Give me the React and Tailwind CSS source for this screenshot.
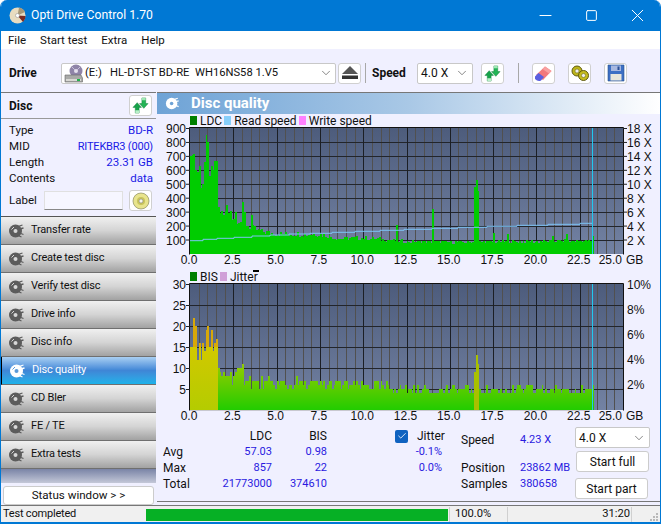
import React from 'react'
import { ChevronDown, Minus, Square, X, Check } from 'lucide-react'

const rnd = (i) => {
  const x = Math.sin(i * 12.9898) * 43758.5453
  return x - Math.floor(x)
}

const lerp = (pts, gb) => {
  for (let i = 1; i < pts.length; i++) {
    if (gb <= pts[i][0]) {
      const [a, va] = pts[i - 1]
      const [b, vb] = pts[i]
      return va + ((vb - va) * (gb - a)) / (b - a)
    }
  }
  return pts[pts.length - 1][1]
}

const gbToX = (gb) => 190 + gb * 17.32
const BARS = 233

// LDC values, one bar per 0.1 GB
const ldcStart = [700, 710, 720, 600, 590, 630, 470, 500, 660, 857, 800, 560, 630, 600, 670, 670]
const ldcBase = [[1.6, 300], [2.3, 280], [3, 230], [3.5, 185], [4, 165], [5, 145], [7.5, 140], [8.5, 110], [10, 115], [12.5, 90], [15, 85], [20, 90], [23.3, 95]]
const ldcPeaks = { 21: 350, 23: 310, 26: 300, 30: 370, 31: 300, 35: 280, 119: 210, 140: 320, 164: 480, 165: 530, 166: 450, 175: 150, 183: 140, 209: 130, 217: 140, 232: 130 }
const ldc = Array.from({ length: BARS }, (_, i) => {
  if (i < ldcStart.length) return ldcStart[i]
  if (ldcPeaks[i]) return ldcPeaks[i]
  return lerp(ldcBase, i / 10) * (0.86 + 0.28 * rnd(i))
})

const bisStart = [15, 15, 22, 20, 12, 16, 12, 16, 14, 19, 20, 15, 19, 14, 16, 17]
const bisBase = [[1.6, 8.500], [3.2, 8.500], [3.6, 6.500], [10, 6], [13, 5], [23.3, 4.800]]
const bisPeaks = { 30: 11, 164: 9, 165: 13, 166: 11 }
const bis = Array.from({ length: BARS }, (_, i) => {
  if (i < bisStart.length) return bisStart[i]
  if (bisPeaks[i]) return bisPeaks[i]
  return Math.round(lerp(bisBase, i / 10) * (0.72 + 0.5 * rnd(i + 400)))
})

const readSpeed = [
  [190, 240.7], [203, 239.3], [217, 238.3], [234, 237.3], [252, 236], [270, 235], [289, 234], [310, 233.3], [332, 232.3], [355, 231.3], [380, 230.3], [404, 229.3],
  [432, 228.3], [458, 227.3], [487, 226.3], [517, 225.3], [548, 224.3], [580, 223.3], [592, 223.3],
]

const Grid = ({ top, bottom, rows }) => {
  const minor = []
  const major = []
  for (let i = 1; i < 50; i++) {
    const x = Math.round(190 + i * 8.66) + 0.5
    if (i % 5 === 0) major.push(x)
    else minor.push(x)
  }
  return (
    <g strokeWidth="1" shapeRendering="crispEdges">
      {minor.map((x) => <line key={x} x1={x} x2={x} y1={top} y2={bottom} stroke="#51504f" />)}
      {rows.map((y) => <line key={y} x1="190" x2="623" y1={y} y2={y} stroke="#22252b" />)}
      {major.map((x) => <line key={x} x1={x} x2={x} y1={top} y2={bottom} stroke="#1c1f25" />)}
    </g>
  )
}

const XLabels = ({ y }) => (
  <g fontFamily="'Liberation Sans', sans-serif" fontSize="12" fill="#111">
    {['0.0', '2.5', '5.0', '7.5', '10.0', '12.5', '15.0', '17.5', '20.0', '22.5'].map((t, i) => (
      <text key={t} x={189 + i * 43.3} y={y} textAnchor="middle">{t}</text>
    ))}
    <text x="622" y={y} textAnchor="end">25.0</text>
    <text x="626" y={y}>GB</text>
  </g>
)

const TopChart = () => (
  <svg width="504" height="146" viewBox="157 122 504 146" className="-mt-[5px] block">
    <defs>
      <linearGradient id="plotA" x1="0" y1="0" x2="0" y2="1">
        <stop offset="0" stopColor="#4d5c7c" />
        <stop offset="1" stopColor="#7382a3" />
      </linearGradient>
    </defs>
    <rect x="190" y="128" width="433" height="126" fill="url(#plotA)" />
    <Grid top={128} bottom={254} rows={[142.5, 156.5, 170.5, 184.5, 198.5, 212.5, 226.5, 240.5]} />
    {ldc.map((v, i) => (
      <rect key={i} x={gbToX(i / 10)} y={254 - v * 0.1394} width="1.9" height={v * 0.1394} fill="#00cc00" shapeRendering="crispEdges" />
    ))}
    <polyline
      fill="none"
      stroke="#7cc4f4"
      strokeWidth="1"
      points={readSpeed.map(([x, y], i) => (i === 0 ? `${x},${y}` : `${x},${readSpeed[i - 1][1]} ${x},${y}`)).join(' ')}
    />
    <line x1="592.5" x2="592.5" y1="128" y2="254" stroke="#22c8ee" />
    <path d="M189.5 127.5H623.5V254.5" fill="none" stroke="#111" />
    <path d="M189.5 127.5V254.5" fill="none" stroke="#111" />
    <g fontFamily="'Liberation Sans', sans-serif" fontSize="12" fill="#111">
      {[900, 800, 700, 600, 500, 400, 300, 200, 100].map((t, i) => (
        <g key={t}>
          <text x="186" y={133 + i * 13.94} textAnchor="end">{t}</text>
          <line x1="186" x2="190" y1={128.5 + i * 13.94} y2={128.5 + i * 13.94} stroke="#222" />
        </g>
      ))}
      {[18, 16, 14, 12, 10, 8, 6, 4, 2].map((t, i) => (
        <g key={t}>
          <text x="627" y={133 + i * 13.94}>{t} X</text>
          <line x1="623" x2="627" y1={128.5 + i * 13.94} y2={128.5 + i * 13.94} stroke="#222" />
        </g>
      ))}
    </g>
    <XLabels y={264} />
  </svg>
)

const BottomChart = () => (
  <svg width="504" height="146" viewBox="157 278 504 146" className="-mt-[5px] block">
    <defs>
      <linearGradient id="plotB" x1="0" y1="0" x2="0" y2="1">
        <stop offset="0" stopColor="#4d5c7c" />
        <stop offset="1" stopColor="#7382a3" />
      </linearGradient>
      <linearGradient id="bisFill" gradientUnits="userSpaceOnUse" x1="0" y1="410" x2="0" y2="350">
        <stop offset="0" stopColor="#22cc00" />
        <stop offset="0.4" stopColor="#5fcc00" />
        <stop offset="1" stopColor="#b4cc00" />
      </linearGradient>
      <linearGradient id="bisHigh" gradientUnits="userSpaceOnUse" x1="0" y1="410" x2="0" y2="345">
        <stop offset="0" stopColor="#b4cc00" />
        <stop offset="1" stopColor="#d2c800" />
      </linearGradient>
    </defs>
    <rect x="190" y="284" width="433" height="126" fill="url(#plotB)" />
    <Grid top={284} bottom={410} rows={[305.5, 326.5, 347.5, 368.5, 389.5]} />
    {bis.map((v, i) => {
      const early = i < 16
      const spike = i >= 164 && i <= 166
      return (
        <g key={i} shapeRendering="crispEdges">
          <rect x={gbToX(i / 10)} y={410 - v * 4.2} width="1.9" height={v * 4.2} fill={early ? 'url(#bisHigh)' : spike ? '#a8c000' : 'url(#bisFill)'} />
          {early && v > 15 && <rect x={gbToX(i / 10)} y={410 - v * 4.2} width="1.9" height={(v - 15) * 4.2} fill="#d8a808" />}
        </g>
      )
    })}
    <line x1="592.5" x2="592.5" y1="284" y2="410" stroke="#22c8ee" />
    <path d="M189.5 410.5V283.5H623.5V410.5" fill="none" stroke="#111" />
    <line x1="190" x2="590" y1="410.5" y2="410.5" stroke="#c8c8d0" />
    <g fontFamily="'Liberation Sans', sans-serif" fontSize="12" fill="#111">
      {[30, 25, 20, 15, 10, 5].map((t, i) => (
        <g key={t}>
          <text x="186" y={289 + i * 21} textAnchor="end">{t}</text>
          <line x1="186" x2="190" y1={284.5 + i * 21} y2={284.5 + i * 21} stroke="#222" />
        </g>
      ))}
      {['10%', '8%', '6%', '4%', '2%'].map((t, i) => (
        <text key={t} x="627" y={289 + i * 25}>{t}</text>
      ))}
    </g>
    <XLabels y={420} />
  </svg>
)

const Legend = ({ items, children }) => (
  <div className="relative z-10 flex h-[13px] items-center gap-[2px] pl-[33px] text-[12px] leading-none text-[#111]">
    {items.map(([label, color]) => (
      <span key={label} className="flex items-center gap-[3px]">
        <span className={`h-[9px] w-[7px] ${color}`} />
        {label}
      </span>
    ))}
    {children}
  </div>
)

const Arrows = ({ size = 18 }) => (
  <svg width={size} height={size} viewBox="0 0 18 18">
    <path d="M1 11 5.500 6 10 11H7.500v6h-4v-6z" fill="#16a34a" stroke="#0b7a35" strokeWidth="0.5" />
    <path d="M8 7 12.500 12 17 7h-2.500V1h-4v6z" fill="#22b455" stroke="#0b7a35" strokeWidth="0.5" />
    <path d="M3.500 14h4v3h-4z" fill="#b9f0c8" />
    <path d="M10.500 1h4v2.500h-4z" fill="#9fe8b4" />
  </svg>
)

const IconButton = ({ children, className = '' }) => (
  <div className={`flex h-[21px] w-[23px] items-center justify-center rounded-[3px] border border-[#d0d0d0] bg-white ${className}`}>
    {children}
  </div>
)

const DriveIcon = () => (
  <svg width="20" height="19" viewBox="0 0 20 19">
    <circle cx="12" cy="7" r="6.500" fill="#8f84a8" />
    <circle cx="12" cy="7" r="2" fill="#e4e0ee" />
    <path d="M8 3l3 3M16 3l-3 3" stroke="#c8c0da" />
    <path d="M1 11h16l1.500 3v4H1z" fill="#a9aaa8" stroke="#666" strokeWidth="0.6" />
    <path d="M2 15h15v2H2z" fill="#d8d8d4" />
    <rect x="13" y="15" width="3" height="2" fill="#22b14c" />
  </svg>
)

const EraserIcon = () => (
  <svg width="19" height="18" viewBox="0 0 19 18">
    <path d="M2 11 11 2.500 17.500 7 9 16z" fill="#f2787c" />
    <path d="M11 2.500 17.500 7 15 9.500 8.500 5z" fill="#f8a0a0" />
    <path d="M1 12.500 4.500 9 10 13 7 16.500Q4 18 1 15z" fill="#5a5fe0" />
  </svg>
)

const ChainIcon = () => (
  <svg width="20" height="18" viewBox="0 0 20 18">
    <circle cx="7" cy="7" r="5" fill="#bdb51a" stroke="#5f5a10" />
    <circle cx="7" cy="7" r="2" fill="#eee" stroke="#5f5a10" strokeWidth="0.5" />
    <circle cx="13.500" cy="11.500" r="5" fill="#c4bb1e" stroke="#5f5a10" />
    <circle cx="13.500" cy="11.500" r="2" fill="#eee" stroke="#5f5a10" strokeWidth="0.5" />
  </svg>
)

const FloppyIcon = () => (
  <svg width="18" height="18" viewBox="0 0 18 18">
    <path d="M1 1h16v16H1z" fill="#3d6fc4" stroke="#28508f" strokeWidth="0.6" />
    <rect x="4" y="1.500" width="10" height="5.500" fill="#a8b8e0" />
    <rect x="10.500" y="2.500" width="2" height="3.500" fill="#2b4f96" />
    <rect x="3.500" y="10" width="11" height="6.500" fill="#e8e6dc" />
  </svg>
)

const EjectIcon = () => (
  <svg width="18" height="14" viewBox="0 0 18 14">
    <path d="M9 0 17 8H1z" fill="#555" />
    <rect x="1" y="9.500" width="16" height="3.500" fill="#333" />
  </svg>
)

const DiscYellow = () => (
  <svg width="18" height="18" viewBox="0 0 18 18">
    <circle cx="9" cy="9" r="8" fill="#e8e48c" stroke="#8b8b60" strokeWidth="0.7" />
    <circle cx="9" cy="9" r="4" fill="#c8c45c" />
    <circle cx="9" cy="9" r="2" fill="#f8f8f0" stroke="#777" strokeWidth="0.5" />
  </svg>
)

const NavIcon = ({ active }) => {
  const c = active ? '#ffffff' : '#5c5c5c'
  const h = active ? '#5c9ad8' : '#d8d8d8'
  return (
    <svg width="17" height="16" viewBox="0 0 17 16" className="shrink-0">
      <circle cx="7.500" cy="8" r="6.500" fill={c} />
      <circle cx="7.500" cy="8" r="2" fill={h} />
      <path d="M10 3.500 14.500 2M11.500 6l4-1M11.500 10l4 1.500M10 12.500l3.500 1.500" stroke={c} strokeWidth="1.300" />
      <path d="M3.500 6.500 6 4" stroke={h} strokeWidth="1" />
    </svg>
  )
}

const NavButton = ({ label, active }) => (
  <div
    className={`flex h-[28px] items-center gap-[6px] border-b border-[#6f6f6f] pl-[7px] text-[11px] tracking-[-0.2px] ${
      active
        ? 'border-l border-l-black bg-gradient-to-b from-[#a9cff2] via-[#3f86d6] to-[#1bb2ea] text-white'
        : 'bg-gradient-to-b from-[#f0f0f0] via-[#d4d4d4] to-[#a2a2a2] text-[#111]'
    }`}
  >
    <NavIcon active={active} />
    {label}
  </div>
)

const InfoRow = ({ label, value, tight }) => (
  <div className="flex h-[16px] items-center justify-between">
    <span className="text-[#111]">{label}</span>
    <span className={tight ? 'text-[11px] tracking-[-0.2px] text-[#1a1ae6]' : 'text-[11.500px] text-[#1a1ae6]'}>{value}</span>
  </div>
)

const navItems = ['Transfer rate', 'Create test disc', 'Verify test disc', 'Drive info', 'Disc info', 'Disc quality', 'CD Bler', 'FE / TE', 'Extra tests']

const Blue = ({ children, className = '' }) => <span className={`text-[11px] text-[#2a1ae0] ${className}`}>{children}</span>

const Select = ({ className = '' }) => (
  <div className={`flex items-center justify-between rounded-[2px] border border-[#c8c8c8] bg-white pl-[3px] pr-[3px] text-[12px] text-[#111] ${className}`}>
    <span>4.0 X</span>
    <ChevronDown size={14} strokeWidth={1.200} className="text-[#555]" />
  </div>
)

const App = () => {
  return (
    <div
      className="flex h-[524px] w-[661px] flex-col overflow-hidden rounded-t-[7px] border-x border-b-2 border-[#0078d4] bg-[#f0f0ff]"
      style={{ fontFamily: "Roboto, sans-serif" }}
    >
      {/* title bar */}
      <div className="flex h-[31px] shrink-0 items-center bg-[#0078d4] pl-[8px] text-white">
        <svg width="17" height="17" viewBox="0 0 17 17">
          <circle cx="8.500" cy="8.500" r="8" fill="#e8dcc0" />
          <path d="M8.500 8.500 16 5a8 8 0 0 0-6-4.500z" fill="#a89878" />
          <path d="M8.500 8.500 14 15a8 8 0 0 0 2.500-6z" fill="#7a2a22" />
          <circle cx="8.500" cy="8.500" r="2" fill="#fff" stroke="#888" strokeWidth="0.5" />
        </svg>
        <span className="ml-[5px] text-[12.200px]">Opti Drive Control 1.70</span>
        <div className="ml-auto flex items-center">
          <span className="flex w-[46px] justify-center"><Minus size={19} strokeWidth={1} absoluteStrokeWidth /></span>
          <span className="flex w-[46px] justify-center"><Square size={13} strokeWidth={1} absoluteStrokeWidth /></span>
          <span className="flex w-[46px] justify-center"><X size={21} strokeWidth={1} absoluteStrokeWidth /></span>
        </div>
      </div>

      {/* menu */}
      <div className="flex h-[18px] shrink-0 items-center gap-[14px] bg-white pl-[7px] pt-[2px] text-[11.500px] text-[#111]">
        <span>File</span>
        <span>Start test</span>
        <span>Extra</span>
        <span>Help</span>
      </div>

      {/* toolbar */}
      <div className="flex h-[43px] shrink-0 items-center pl-[8px] pt-[5px] text-[#111]">
        <span className="w-[52px] text-[12px] font-bold">Drive</span>
        <div className="flex h-[21px] w-[275px] items-center rounded-[2px] border border-[#c8c8c8] bg-white pl-[2px] pr-[2px] text-[11.200px]">
          <DriveIcon />
          <span className="ml-[1px]">(E:)&nbsp;&nbsp; HL-DT-ST BD-RE&nbsp; WH16NS58 1.V5</span>
          <ChevronDown size={14} strokeWidth={1.200} className="ml-auto text-[#555]" />
        </div>
        <IconButton className="ml-[2px]"><EjectIcon /></IconButton>
        <div className="ml-[4px] h-[20px] w-px bg-[#a8a8a8]" />
        <span className="ml-[6px] w-[39px] text-[12px] font-bold">Speed</span>
        <Select className="ml-[6px] h-[21px] w-[56px]" />
        <IconButton className="ml-[8px]"><Arrows size={17} /></IconButton>
        <div className="ml-[14px] h-[20px] w-px bg-[#a8a8a8]" />
        <IconButton className="ml-[13px]"><EraserIcon /></IconButton>
        <IconButton className="ml-[13px]"><ChainIcon /></IconButton>
        <IconButton className="ml-[13px]"><FloppyIcon /></IconButton>
      </div>

      <div className="flex min-h-0 flex-1">
        {/* left column */}
        <div className="flex w-[155px] shrink-0 flex-col border-t border-[#777]">
          <div className="flex h-[26px] items-center justify-between border-b border-[#999] pl-[8px] pr-[4px] text-[12px] font-bold text-[#111]">
            Disc
            <IconButton className="h-[21px]"><Arrows size={17} /></IconButton>
          </div>
          <div className="flex h-[97px] flex-col px-[8px] pr-[3px] pt-[4px] text-[11.500px]">
            <InfoRow label="Type" value="BD-R" />
            <InfoRow label="MID" value="RITEKBR3 (000)" tight />
            <InfoRow label="Length" value="23.31 GB" />
            <InfoRow label="Contents" value="data" />
            <div className="mt-[3px] flex items-center text-[#111]">
              <span className="w-[35px]">Label</span>
              <div className="h-[19px] w-[79px] border border-[#e0e0e0] border-b-[#888] bg-[#f6f6ff]" />
              <IconButton className="ml-[6px]"><DiscYellow /></IconButton>
            </div>
          </div>
          <div className="border-t border-[#555]">
            {navItems.map((item) => (
              <NavButton key={item} label={item} active={item === 'Disc quality'} />
            ))}
          </div>
          <div className="h-[14px] bg-gradient-to-b from-[#7a84a6] to-[#c4c8d8]" />
          <div className="mx-[2px] mt-[3px] flex h-[19px] items-center justify-center rounded-[3px] border border-[#ccc] bg-white text-[11.600px] text-[#111]">
            Status window &gt; &gt;
          </div>
        </div>

        {/* right column */}
        <div className="mb-[3px] ml-[1px] flex min-w-0 flex-1 flex-col border-y border-[#777]">
          <div className="flex h-[21px] shrink-0 items-center bg-gradient-to-r from-[#6ea3d6] via-[#a9c8e6] to-white pl-[8px] text-[15px] font-bold text-white">
            <svg width="15" height="15" viewBox="0 0 17 16" className="mr-[11px]">
              <circle cx="7.500" cy="8" r="6.500" fill="#fff" />
              <circle cx="7.500" cy="8" r="2" fill="#6ea3d6" />
              <path d="M10 3.500 14.500 2M11.500 6l4-1M11.500 10l4 1.500" stroke="#fff" strokeWidth="1.300" />
            </svg>
            Disc quality
          </div>
          <Legend items={[['LDC', 'bg-[#008000]'], ['Read speed', 'bg-[#87cefa]'], ['Write speed', 'bg-[#ff80ff]']]} />
          <TopChart />
          <div className="h-[2px]" />
          <Legend items={[['BIS', 'bg-[#008000]'], ['Jitter', 'bg-[#d0a0d8]']]}>
            <span className="absolute left-[96px] top-0 h-[2px] w-[6px] bg-black" />
          </Legend>
          <BottomChart />

          {/* stats */}
          <div className="flex flex-1 text-[12px] leading-[16px] text-[#111]">
            <div className="ml-[6px] mt-[4px] grid h-[64px] w-[165px] grid-cols-[38px_71px_55px] grid-rows-4">
              <span />
              <span className="text-right">LDC</span>
              <span className="text-right">BIS</span>
              <span>Avg</span>
              <Blue className="text-right">57.03</Blue>
              <Blue className="text-right">0.98</Blue>
              <span>Max</span>
              <Blue className="text-right">857</Blue>
              <Blue className="text-right">22</Blue>
              <span>Total</span>
              <Blue className="text-right">21773000</Blue>
              <Blue className="text-right">374610</Blue>
            </div>
            <div className="ml-[67px] mt-[4px] flex h-[48px] w-[47px] flex-col">
              <div className="flex h-[16px] items-center gap-[9px]">
                <span className="flex h-[13px] w-[13px] shrink-0 items-center justify-center rounded-[2px] bg-[#0f62c0]">
                  <Check size={10} strokeWidth={2} className="text-white" />
                </span>
                Jitter
              </div>
              <Blue className="text-right">-0.1%</Blue>
              <Blue className="text-right">0.0%</Blue>
            </div>
            <div className="ml-[19px] mt-[8px] grid h-[60px] w-[114px] grid-cols-[59px_55px] grid-rows-[28px_16px_16px] whitespace-nowrap">
              <span>Speed</span>
              <Blue>4.23 X</Blue>
              <span>Position</span>
              <Blue>23862 MB</Blue>
              <span>Samples</span>
              <Blue>380658</Blue>
            </div>
            <div className="flex flex-col pt-[3px]">
              <Select className="h-[21px] w-[75px]" />
              <div className="ml-[1px] mt-[3px] flex h-[21px] w-[73px] items-center justify-center rounded-[3px] border border-[#ccc] bg-white">Start full</div>
              <div className="mt-[6px] flex h-[21px] w-[73px] items-center justify-center rounded-[3px] border border-[#ccc] bg-white">Start part</div>
            </div>
          </div>
        </div>
      </div>

      {/* status bar */}
      <div className="flex h-[17px] shrink-0 items-center border-t border-[#777] bg-[#f0f0f0] pt-[1px] text-[11.200px] text-[#111]">
        <span className="w-[143px] pl-[2px] text-[11px] tracking-[-0.2px]">Test completed</span>
        <div className="ml-[2px] h-[12px] w-[302px] bg-[#06b025]" />
        <div className="ml-[1px] h-full w-px bg-[#d0d0d0]" />
        <span className="w-[57px] pl-[5px]">100.0%</span>
        <div className="h-full w-px bg-[#d0d0d0]" />
        <span className="w-[122px] text-right">31:20</span>
        <div className="ml-px h-full w-px bg-[#d0d0d0]" />
        <svg width="10" height="10" viewBox="0 0 10 10" className="ml-auto mr-[1px] self-end">
          <path d="M7 1h2v2H7zM4 4h2v2H4zM7 4h2v2H7zM1 7h2v2H1zM4 7h2v2H4zM7 7h2v2H7z" fill="#b8b8b8" />
        </svg>
      </div>
    </div>
  )
}

export default App
